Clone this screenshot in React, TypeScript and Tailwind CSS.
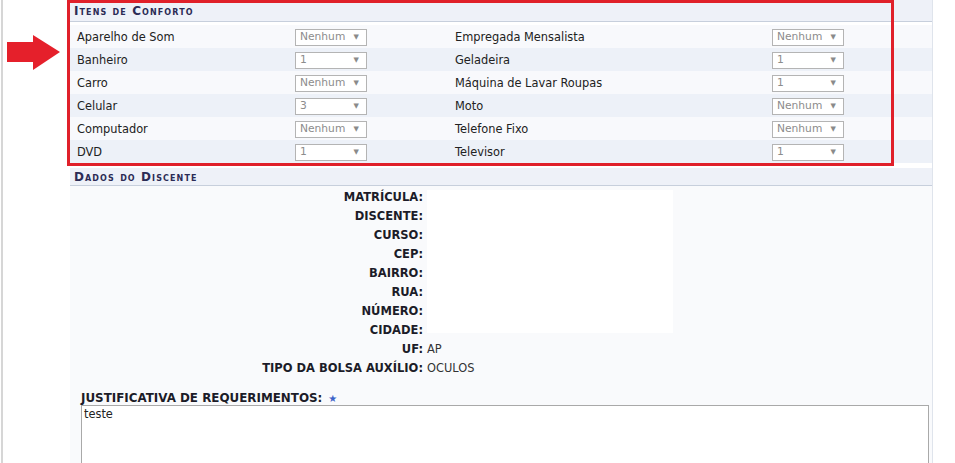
import React from "react";

type Item = {label: string; value: string};

const leftItems: Item[] = [
  {label: "Aparelho de Som", value: "Nenhum"},
  {label: "Banheiro", value: "1"},
  {label: "Carro", value: "Nenhum"},
  {label: "Celular", value: "3"},
  {label: "Computador", value: "Nenhum"},
  {label: "DVD", value: "1"}
];

const rightItems: Item[] = [
  {label: "Empregada Mensalista", value: "Nenhum"},
  {label: "Geladeira", value: "1"},
  {label: "Máquina de Lavar Roupas", value: "1"},
  {label: "Moto", value: "Nenhum"},
  {label: "Telefone Fixo", value: "Nenhum"},
  {label: "Televisor", value: "1"}
];

const discenteFields = [
  {label: "MATRÍCULA:", value: ""},
  {label: "DISCENTE:", value: ""},
  {label: "CURSO:", value: ""},
  {label: "CEP:", value: ""},
  {label: "BAIRRO:", value: ""},
  {label: "RUA:", value: ""},
  {label: "NÚMERO:", value: ""},
  {label: "CIDADE:", value: ""},
  {label: "UF:", value: "AP"},
  {label: "TIPO DA BOLSA AUXÍLIO:", value: "OCULOS"}
];

function FakeSelect({value}: {value: string}) {
  return (
    <div className="flex h-[17px] w-[72px] items-center justify-between border border-[#b4b4b4] bg-white pl-[4px] pr-[7px] text-[10.7px] leading-none text-[#8c8c8c]">
      <span>{value}</span>
      <span className="text-[7px] text-[#8a8a8a]">▼</span>
    </div>
  );
}

function SectionHeader({title}: {title: string}) {
  return (
    <div className="flex h-full items-center border-b border-[#c7cfdc] bg-[#eef1f8] pl-[4px] pt-[1px] text-[12px] font-bold tracking-[1.1px] text-[#2b2b55] [font-variant:small-caps]">
      {title}
    </div>
  );
}

export default function App() {
  return (
    <div className="relative h-[463px] w-[955px] overflow-hidden bg-white font-['DejaVu_Sans',Verdana,sans-serif] text-[#222]">
      <div className="absolute bottom-0 left-[1px] top-0 w-[2px] bg-[#d6d6d6]" />

      {/* arrow pointing at the box */}
      <svg className="absolute left-0 top-0" width="64" height="74" viewBox="0 0 64 74">
        <polygon points="7,42 33,42 33,35 60,52 33,70 33,62 7,62" fill="#e5202b" />
      </svg>

      <div className="ml-[70px] w-[863px] border-r border-[#dfe4ec]">
        <div className="h-[22px]">
          <SectionHeader title="Itens de Conforto" />
        </div>
        <div className="pt-[3px]">
          {leftItems.map((item, i) => (
            <div
              key={item.label}
              className={`flex h-[23px] items-center pl-[7px] pt-[2px] text-[11.4px] text-[#222] ${
                i % 2 === 0 ? "bg-[#f8f9fc]" : "bg-[#edf1f8]"
              }`}
            >
              <span className="w-[218px]">{item.label}</span>
              <FakeSelect value={item.value} />
              <span className="w-[88px]" />
              <span className="w-[317px]">{rightItems[i].label}</span>
              <FakeSelect value={rightItems[i].value} />
            </div>
          ))}
        </div>

        <div className="mt-[5px] h-[18px]">
          <SectionHeader title="Dados do Discente" />
        </div>

        <div className="relative bg-[#f9fafc] pb-[1px] pt-[2px]">
          <div className="absolute left-[357px] top-[4px] h-[143px] w-[246px] bg-white" />
          {discenteFields.map((field) => (
            <div key={field.label} className="relative flex h-[19px] items-center">
              <span className="w-[353px] text-right text-[11.5px] font-bold text-[#1c1c28]">
                {field.label}
              </span>
              <span className="pl-[4px] text-[11.4px] text-[#333]">{field.value}</span>
            </div>
          ))}
        </div>

        <div className="bg-[#f9fafc] pl-[11px] pr-[3px] pt-[13px]">
          <div className="flex items-center gap-[6px] text-[11.9px] font-bold leading-[13px] text-[#1c1c28]">
            JUSTIFICATIVA DE REQUERIMENTOS:
            <span className="text-[10px] text-[#3d63c9]">★</span>
          </div>
          <div className="h-[80px] w-[848px] border border-[#a9a9a9] bg-white px-[2px] text-[11.4px] leading-[16px] text-[#222]">
            teste
          </div>
        </div>
      </div>

      {/* highlight box drawn over the first table */}
      <div className="pointer-events-none absolute left-[67px] top-0 h-[166px] w-[827px] border-[3px] border-[#e0202a]" />
    </div>
  );
}
